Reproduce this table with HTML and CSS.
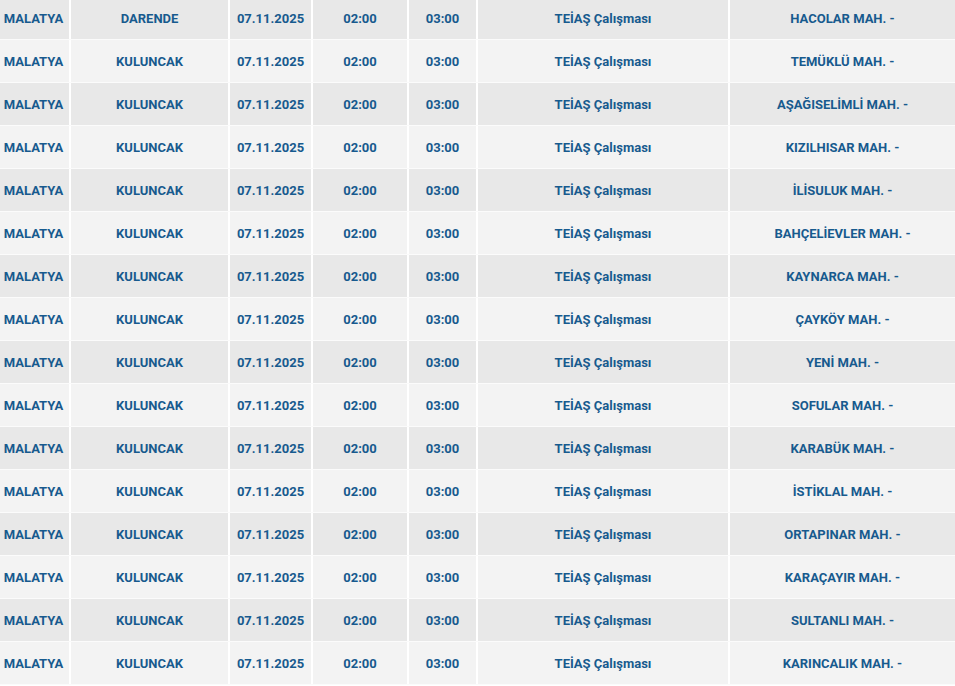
FILE: index.html
```html
<!DOCTYPE html>
<html lang="tr">
<head>
<meta charset="utf-8">
<link rel="stylesheet" href="styles.css">
</head>
<body>
<div class="outages">
  <div class="row"><div>MALATYA</div><div>DARENDE</div><div>07.11.2025</div><div>02:00</div><div>03:00</div><div>TEİAŞ Çalışması</div><div>HACOLAR MAH. -</div></div>
  <div class="row"><div>MALATYA</div><div>KULUNCAK</div><div>07.11.2025</div><div>02:00</div><div>03:00</div><div>TEİAŞ Çalışması</div><div>TEMÜKLÜ MAH. -</div></div>
  <div class="row"><div>MALATYA</div><div>KULUNCAK</div><div>07.11.2025</div><div>02:00</div><div>03:00</div><div>TEİAŞ Çalışması</div><div>AŞAĞISELİMLİ MAH. -</div></div>
  <div class="row"><div>MALATYA</div><div>KULUNCAK</div><div>07.11.2025</div><div>02:00</div><div>03:00</div><div>TEİAŞ Çalışması</div><div>KIZILHISAR MAH. -</div></div>
  <div class="row"><div>MALATYA</div><div>KULUNCAK</div><div>07.11.2025</div><div>02:00</div><div>03:00</div><div>TEİAŞ Çalışması</div><div>İLİSULUK MAH. -</div></div>
  <div class="row"><div>MALATYA</div><div>KULUNCAK</div><div>07.11.2025</div><div>02:00</div><div>03:00</div><div>TEİAŞ Çalışması</div><div>BAHÇELİEVLER MAH. -</div></div>
  <div class="row"><div>MALATYA</div><div>KULUNCAK</div><div>07.11.2025</div><div>02:00</div><div>03:00</div><div>TEİAŞ Çalışması</div><div>KAYNARCA MAH. -</div></div>
  <div class="row"><div>MALATYA</div><div>KULUNCAK</div><div>07.11.2025</div><div>02:00</div><div>03:00</div><div>TEİAŞ Çalışması</div><div>ÇAYKÖY MAH. -</div></div>
  <div class="row"><div>MALATYA</div><div>KULUNCAK</div><div>07.11.2025</div><div>02:00</div><div>03:00</div><div>TEİAŞ Çalışması</div><div>YENİ MAH. -</div></div>
  <div class="row"><div>MALATYA</div><div>KULUNCAK</div><div>07.11.2025</div><div>02:00</div><div>03:00</div><div>TEİAŞ Çalışması</div><div>SOFULAR MAH. -</div></div>
  <div class="row"><div>MALATYA</div><div>KULUNCAK</div><div>07.11.2025</div><div>02:00</div><div>03:00</div><div>TEİAŞ Çalışması</div><div>KARABÜK MAH. -</div></div>
  <div class="row"><div>MALATYA</div><div>KULUNCAK</div><div>07.11.2025</div><div>02:00</div><div>03:00</div><div>TEİAŞ Çalışması</div><div>İSTİKLAL MAH. -</div></div>
  <div class="row"><div>MALATYA</div><div>KULUNCAK</div><div>07.11.2025</div><div>02:00</div><div>03:00</div><div>TEİAŞ Çalışması</div><div>ORTAPINAR MAH. -</div></div>
  <div class="row"><div>MALATYA</div><div>KULUNCAK</div><div>07.11.2025</div><div>02:00</div><div>03:00</div><div>TEİAŞ Çalışması</div><div>KARAÇAYIR MAH. -</div></div>
  <div class="row"><div>MALATYA</div><div>KULUNCAK</div><div>07.11.2025</div><div>02:00</div><div>03:00</div><div>TEİAŞ Çalışması</div><div>SULTANLI MAH. -</div></div>
  <div class="row"><div>MALATYA</div><div>KULUNCAK</div><div>07.11.2025</div><div>02:00</div><div>03:00</div><div>TEİAŞ Çalışması</div><div>KARINCALIK MAH. -</div></div>
</div>
</body>
</html>
```

FILE: styles.css
```css
html, body {
  margin: 0;
  padding: 0;
  background: #ffffff;
  overflow: hidden;
}

.outages {
  width: 957px;
  margin: -3px 0 0 -2px;
  font-family: Roboto, "Liberation Sans", sans-serif;
  font-size: 13px;
  font-weight: 700;
  color: #175a8e;
}

.row {
  display: grid;
  grid-template-columns: 71px 157px 81px 94px 67px 250px 225px;
  column-gap: 2px;
  background: #ffffff;
  border-bottom: 1px solid #fbfbfb;
}

.row > div {
  height: 42px;
  display: flex;
  align-items: center;
  justify-content: center;
  background: #e8e8e8;
  white-space: nowrap;
}

.row:nth-child(even) > div {
  background: #f3f3f3;
}
```
